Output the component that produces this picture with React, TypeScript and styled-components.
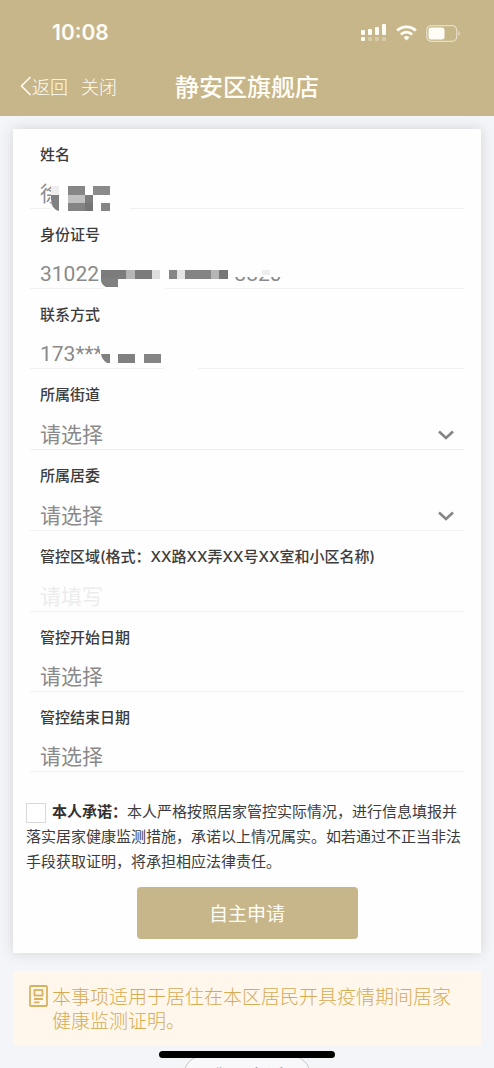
import React from "react";
import styled, { createGlobalStyle, css } from "styled-components";

const GlobalStyle = createGlobalStyle`
  *, *::before, *::after { box-sizing: border-box; }
  body {
    margin: 0;
    background: #f4f5f8;
    color: #444;
    font-family: Roboto, "Noto Sans CJK SC", sans-serif;
  }
`;

const Page = styled.div`
  height: 100vh;
  overflow: hidden;
`;

const Header = styled.header`
  background: #c7b68a;
  color: #fffdf6;
`;

const StatusBar = styled.div`
  display: flex;
  align-items: center;
  justify-content: space-between;
  height: 60px;
  padding: 6px 33px 0 52px;
`;

const Time = styled.span`
  font: 600 21px/24px Inter, sans-serif;
`;

const StatusIcons = styled.div`
  display: flex;
  align-items: center;
  gap: 9px;
`;

const NavBar = styled.nav`
  display: grid;
  grid-template-columns: 1fr auto 1fr;
  align-items: center;
  height: 56px;
  padding: 0 20px 4px;
`;

const NavActions = styled.div`
  display: flex;
  gap: 13px;
`;

const NavButton = styled.button`
  display: flex;
  align-items: center;
  padding: 0;
  border: 0;
  background: none;
  color: inherit;
  font: 300 18px/24px "Noto Sans CJK SC", sans-serif;
`;

const Title = styled.h1`
  margin: 0;
  font: 500 24px/32px "Noto Sans CJK SC", sans-serif;
`;

const Content = styled.main`
  padding: 13px 13px 0;
`;

const Card = styled.form`
  padding: 0 13px 14px;
  background: #fefefe;
  box-shadow: 0 0 12px rgba(60, 60, 80, 0.18);
`;

const Field = styled.div<{ $tall?: boolean }>`
  position: relative;
  display: flex;
  flex-direction: column;
  justify-content: space-between;
  height: ${(p) => (p.$tall ? 81 : 80)}px;
  margin: 0 4px;
  padding: 14px 10px 0;
  border-bottom: 1px solid #f0f0f0;
`;

const Label = styled.label`
  font: 500 15px/24px Inter, "Noto Sans CJK SC", sans-serif;
  color: #3c3c3c;
`;

const control = css`
  display: block;
  width: 100%;
  height: 28px;
  margin: 0;
  padding: 0;
  border: 0;
  outline: 0;
  border-radius: 0;
  background: none;
  color: #8a8a8a;
  font: 400 21px/28px Roboto, "Noto Sans CJK SC", sans-serif;
  &::placeholder { color: #8a8a8a; opacity: 1; }
`;

const TextInput = styled.input<{ $faint?: boolean }>`
  ${control}
  ${(p) => p.$faint && css`&::placeholder { color: #ececec; }`}
`;

const SelectWrap = styled.div`
  display: flex;
  align-items: center;
`;

const Select = styled.select`
  ${control}
  appearance: none;
`;

const ChevronSlot = styled.span`
  display: flex;
  flex: none;
`;

const Mosaic = styled.svg`
  position: absolute;
  left: 10px;
  bottom: -4px;
`;

const Pledge = styled.p`
  margin: 0;
  padding: 28px 0 12px;
  font-size: 15px;
  line-height: 25px;
  color: #3c3c3c;
  label { font-weight: 700; color: #303030; }
`;

const CheckBox = styled.input`
  appearance: none;
  width: 20px;
  height: 20px;
  margin: 0 6px 0 0;
  border: 1px solid #d8d8d8;
  background: #fff;
  vertical-align: middle;
`;

const Submit = styled.button`
  display: block;
  width: 50%;
  height: 52px;
  margin: 0 auto;
  border: 0;
  border-radius: 4px;
  background: #c7b68a;
  color: #fffdf6;
  font: 400 19px/28px "Noto Sans CJK SC", sans-serif;
`;

const Notice = styled.aside`
  display: flex;
  gap: 4px;
  margin-top: 18px;
  padding: 13px 16px;
  background: #fff7ec;
  color: #d4ab55;
  font: 300 19px/24px "Noto Sans CJK SC", sans-serif;
  svg { flex: none; margin-top: 1px; }
  p { margin: 0; }
`;

const Appeal = styled.button`
  display: block;
  width: 128px;
  height: 42px;
  margin: 10px auto 0;
  border: 1px solid #c4c4c8;
  border-radius: 21px;
  background: #f8f8fa;
  color: #77777c;
  font: 400 19px/28px "Noto Sans CJK SC", sans-serif;
`;

const HomeIndicator = styled.div`
  position: fixed;
  left: 50%;
  bottom: 10px;
  width: 176px;
  height: 7px;
  border-radius: 4px;
  background: #000;
  transform: translateX(-50%);
`;

type Cell = [x: number, y: number, w: number, h: number, fill: string];

const Redaction = ({ cells, blob }: { cells: Cell[]; blob?: string }) => (
  <Mosaic width="260" height="42" aria-hidden="true">
    {cells.map(([x, y, w, h, fill], i) => (
      <rect key={i} x={x} y={y} width={w} height={h} fill={fill} />
    ))}
    {blob && <path d={blob} fill="#808080" />}
  </Mosaic>
);

const paper = "#fefefe";

const nameCells: Cell[] = [
  [11, 8, 79, 34, paper],
  [11, 16, 8, 9, "#eeeeee"],
  [28, 16, 17, 9, "#868686"],
  [53, 16, 17, 9, "#8b8b8b"],
  [28, 25, 17, 8, "#c0c0c0"],
  [45, 25, 8, 8, "#7d7d7d"],
  [28, 33, 17, 8, "#848484"],
  [45, 33, 8, 8, "#757575"],
  [61, 33, 9, 8, "#858585"],
];

const idCells: Cell[] = [
  [60, 8, 132, 30, paper],
  [63, 36, 62, 4, paper],
  [190, 8, 60, 19, paper],
  [61, 20, 26, 9, "#7c7c7c"],
  [86, 20, 9, 9, "#b5b5b5"],
  [95, 20, 17, 9, "#7b7b7b"],
  [112, 20, 8, 9, "#dedede"],
  [129, 20, 8, 9, "#858585"],
  [137, 20, 8, 9, "#e4e4e4"],
  [145, 20, 26, 9, "#848484"],
  [171, 20, 8, 9, "#b5b5b5"],
  [179, 20, 9, 9, "#777777"],
  [222, 20, 8, 5, "#eeeeee"],
];

const phoneCells: Cell[] = [
  [60, 8, 98, 30, paper],
  [125, 36, 33, 4, paper],
  [78, 24, 17, 9, "#808080"],
  [104, 24, 17, 9, "#858585"],
];

const Chevron = () => (
  <svg width="16" height="10" viewBox="0 0 16 10" fill="none" stroke="#858585" strokeWidth="2.6">
    <path d="M1 1.5 8 8 15 1.5" />
  </svg>
);

type FilledProps = { id: string; label: string; value: string; cells: Cell[]; blob: string };

const Filled = ({ id, label, value, cells, blob }: FilledProps) => (
  <Field>
    <Label htmlFor={id}>{label}</Label>
    <TextInput id={id} value={value} readOnly />
    <Redaction cells={cells} blob={blob} />
  </Field>
);

const Picker = ({ id, label }: { id: string; label: string }) => (
  <Field $tall>
    <Label htmlFor={id}>{label}</Label>
    <SelectWrap>
      <Select id={id}>
        <option>请选择</option>
      </Select>
      <ChevronSlot>
        <Chevron />
      </ChevronSlot>
    </SelectWrap>
  </Field>
);

export default function App() {
  return (
    <Page>
      <GlobalStyle />
      <Header>
        <StatusBar>
          <Time>10:08</Time>
          <StatusIcons>
            <svg width="26" height="18" viewBox="0 0 26 18" fill="#fffdf6">
              <rect x="0" y="6" width="4" height="5" rx="1" />
              <rect x="7" y="5" width="4" height="6" rx="1" />
              <rect x="14" y="3" width="4" height="8" rx="1" />
              <rect x="21" y="0" width="4" height="11" rx="1" />
              <rect x="0" y="13" width="4" height="4" rx="1" />
              <g opacity="0.3">
                <rect x="7" y="13" width="4" height="4" rx="1" />
                <rect x="14" y="13" width="4" height="4" rx="1" />
                <rect x="21" y="13" width="4" height="4" rx="1" />
              </g>
            </svg>
            <svg width="21" height="16" viewBox="0 0 21 16" fill="none" stroke="#fffdf6" strokeWidth="2.8">
              <path d="M1.2 5.6a13.3 13.3 0 0 1 18.6 0" />
              <path d="M4.9 9.4a8 8 0 0 1 11.2 0" />
              <path d="M7.6 12.4a4.1 4.1 0 0 1 5.8 0L10.5 15.4z" fill="#fffdf6" stroke="none" />
            </svg>
            <svg width="35" height="17" viewBox="0 0 35 17" fill="none">
              <rect x="0.7" y="0.7" width="30" height="15.6" rx="4.5" stroke="#fffdf6" strokeOpacity="0.55" strokeWidth="1.2" />
              <rect x="2.5" y="2.5" width="16" height="12" rx="2.5" fill="#fffdf6" />
              <path d="M32.5 6a3 3 0 0 1 0 5z" fill="#fffdf6" fillOpacity="0.6" />
            </svg>
          </StatusIcons>
        </StatusBar>
        <NavBar>
          <NavActions>
            <NavButton type="button">
              <svg width="12" height="20" viewBox="0 0 12 20" fill="none" stroke="#fffdf6" strokeWidth="1.6">
                <path d="M10.5 1 1.5 10l9 9" />
              </svg>
              返回
            </NavButton>
            <NavButton type="button">关闭</NavButton>
          </NavActions>
          <Title>静安区旗舰店</Title>
        </NavBar>
      </Header>
      <Content>
        <Card>
          <Filled id="name" label="姓名" value="徐" cells={nameCells} blob="M11 25h8v16q-8-2-8-12z" />
          <Filled
            id="idno"
            label="身份证号"
            value={"31022" + "\u00a0".repeat(26) + "3820"}
            cells={idCells}
            blob="M61 28h17v9h-12q-4-2-5-6z"
          />
          <Filled id="phone" label="联系方式" value="173***" cells={phoneCells} blob="M61 24h9v9h-3q-5-3-6-9z" />
          <Picker id="street" label="所属街道" />
          <Picker id="committee" label="所属居委" />
          <Field $tall>
            <Label htmlFor="area">管控区域(格式：XX路XX弄XX号XX室和小区名称)</Label>
            <TextInput id="area" placeholder="请填写" $faint />
          </Field>
          <Field>
            <Label htmlFor="start">管控开始日期</Label>
            <TextInput id="start" placeholder="请选择" />
          </Field>
          <Field>
            <Label htmlFor="end">管控结束日期</Label>
            <TextInput id="end" placeholder="请选择" />
          </Field>
          <Pledge>
            <CheckBox type="checkbox" id="pledge" />
            <label htmlFor="pledge">本人承诺：</label>
            本人严格按照居家管控实际情况，进行信息填报并落实居家健康监测措施，承诺以上情况属实。如若通过不正当非法手段获取证明，将承担相应法律责任。
          </Pledge>
          <Submit type="button">自主申请</Submit>
        </Card>
        <Notice>
          <svg width="19" height="22" viewBox="0 0 19 22" fill="none" stroke="#d9b25f" strokeWidth="1.8">
            <rect x="1" y="1" width="17" height="20" rx="1" />
            <rect x="5.5" y="5" width="8" height="5.5" />
            <path d="M5 14h9M5 17.3h5.5" />
          </svg>
          <p>本事项适用于居住在本区居民开具疫情期间居家健康监测证明。</p>
        </Notice>
        <Appeal type="button">我要申诉</Appeal>
      </Content>
      <HomeIndicator />
    </Page>
  );
}
